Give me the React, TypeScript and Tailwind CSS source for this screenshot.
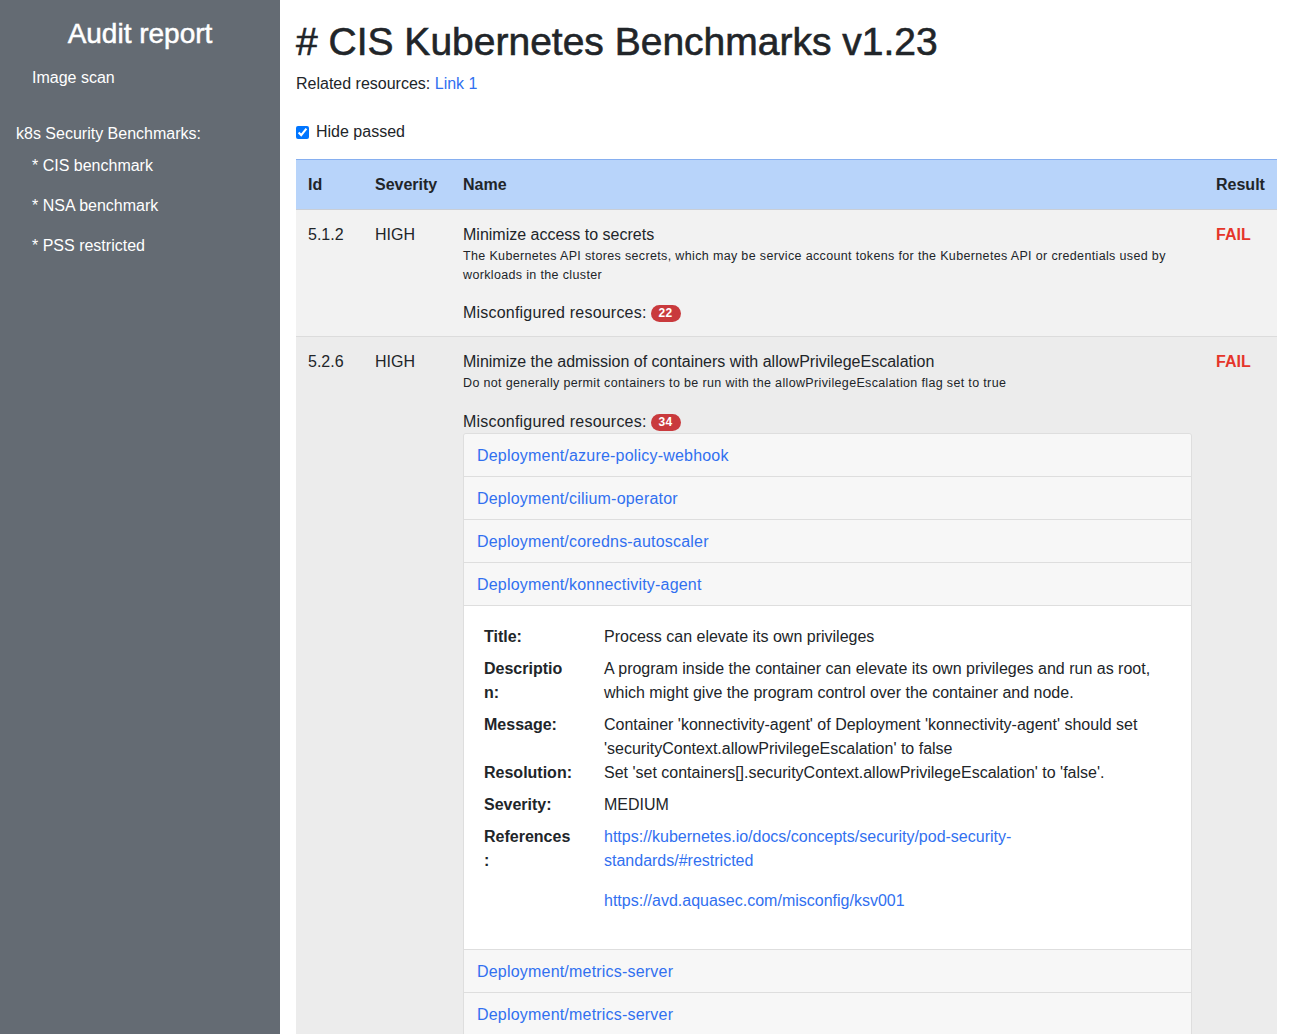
import React from "react";

const LINK = "text-[#3170f0]";

function ListItem({ name }: { name: string }) {
  return (
    <div className="border-t border-[#dedede] bg-[#f7f7f7] px-[13px] pt-[10px] pb-[8px] first:border-t-0">
      <a className={`${LINK} leading-6 tracking-[0.2px]`} href="#">
        {name}
      </a>
    </div>
  );
}

function DetailRow({
  label,
  children,
  className = "",
}: {
  label: React.ReactNode;
  children: React.ReactNode;
  className?: string;
}) {
  return (
    <div className={`flex ${className}`}>
      <div className="w-[120px] shrink-0 font-bold leading-6">{label}</div>
      <div className="leading-6 whitespace-nowrap">{children}</div>
    </div>
  );
}

function Badge({ n }: { n: string }) {
  return (
    <span className="ml-1 inline-flex items-center rounded-full bg-[#c93a3d] px-[8px] h-[17px] text-[12px] font-bold text-white tracking-[0.3px]">
      {n}
    </span>
  );
}

export default function App() {
  return (
    <div className="flex min-h-screen font-['Liberation_Sans',Arial,sans-serif] text-[16px] text-[#212529]">
      <aside className="w-[280px] shrink-0 bg-[#646b73] text-white pt-[17px]">
        <h2 className="text-center text-[28px] leading-[34px] [-webkit-text-stroke:0.5px_white]">
          Audit report
        </h2>
        <div className="mt-[15px] pl-8 leading-6">Image scan</div>
        <div className="mt-8 pl-4 leading-6">k8s Security Benchmarks:</div>
        <div className="mt-2 pl-8 leading-6">* CIS benchmark</div>
        <div className="mt-4 pl-8 leading-6">* NSA benchmark</div>
        <div className="mt-4 pl-8 leading-6">* PSS restricted</div>
      </aside>

      <main className="flex-1 pl-4 pr-[14px] pt-[18px] bg-white">
        <h1 className="text-[39px] leading-[47px] font-medium text-[#212529] [-webkit-text-stroke:0.6px_#212529]">
          # CIS Kubernetes Benchmarks v1.23
        </h1>
        <div className="mt-[7px] leading-6">
          Related resources:{" "}
          <a href="#" className={LINK}>
            Link 1
          </a>
        </div>
        <label className="mt-6 flex items-center leading-6">
          <input
            type="checkbox"
            defaultChecked
            className="w-[13px] h-[13px] m-0 mr-[7px]"
          />
          Hide passed
        </label>

        <table className="mt-[15px] w-full table-fixed border-collapse">
          <colgroup>
            <col className="w-[67px]" />
            <col className="w-[88px]" />
            <col />
            <col className="w-[73px]" />
          </colgroup>
          <thead>
            <tr className="bg-[#b8d4fa] border-t border-t-[#86aff0] border-b border-b-[#c9ced6]">
              <th className="px-3 pt-[13px] pb-3 text-left font-bold leading-6">Id</th>
              <th className="px-3 pt-[13px] pb-3 text-left font-bold leading-6">Severity</th>
              <th className="px-3 pt-[13px] pb-3 text-left font-bold leading-6">Name</th>
              <th className="px-3 pt-[13px] pb-3 text-left font-bold leading-6">Result</th>
            </tr>
          </thead>
          <tbody>
            <tr className="bg-[#f2f2f2] border-b border-[#dcdcdc] align-top">
              <td className="px-3 pt-[13px] pb-3 leading-6">5.1.2</td>
              <td className="px-3 pt-[13px] pb-3 leading-6">HIGH</td>
              <td className="px-3 pt-[13px] pb-[11px]">
                <div className="leading-6">Minimize access to secrets</div>
                <div className="text-[12.5px] leading-[19px] tracking-[0.35px] whitespace-nowrap">
                  The Kubernetes API stores secrets, which may be service account tokens for the
                  Kubernetes API or credentials used by
                  <br />
                  workloads in the cluster
                </div>
                <div className="mt-4 leading-6 flex items-center tracking-[0.2px]">
                  Misconfigured resources:
                  <Badge n="22" />
                </div>
              </td>
              <td className="px-3 pt-[13px] pb-3 leading-6 font-bold text-[#e5352a]">FAIL</td>
            </tr>
            <tr className="bg-[#ececec] align-top">
              <td className="px-3 pt-[13px] pb-3 leading-6">5.2.6</td>
              <td className="px-3 pt-[13px] pb-3 leading-6">HIGH</td>
              <td className="px-3 pt-[13px] pb-3">
                <div className="leading-6">
                  Minimize the admission of containers with allowPrivilegeEscalation
                </div>
                <div className="text-[12.5px] leading-[19px] tracking-[0.35px] whitespace-nowrap">
                  Do not generally permit containers to be run with the allowPrivilegeEscalation
                  flag set to true
                </div>
                <div className="mt-[17px] -mb-px leading-6 flex items-center tracking-[0.2px]">
                  Misconfigured resources:
                  <Badge n="34" />
                </div>
                <div className="border border-[#dedede] rounded-[3px] overflow-hidden">
                  <ListItem name="Deployment/azure-policy-webhook" />
                  <ListItem name="Deployment/cilium-operator" />
                  <ListItem name="Deployment/coredns-autoscaler" />
                  <ListItem name="Deployment/konnectivity-agent" />
                  <div className="border-t border-[#dedede] bg-white pl-5 pr-4 pt-[19px] pb-9">
                    <DetailRow label="Title:">Process can elevate its own privileges</DetailRow>
                    <DetailRow
                      className="mt-2"
                      label={
                        <>
                          Descriptio
                          <br />
                          n:
                        </>
                      }
                    >
                      A program inside the container can elevate its own privileges and run as root,
                      <br />
                      which might give the program control over the container and node.
                    </DetailRow>
                    <DetailRow className="mt-2" label="Message:">
                      Container 'konnectivity-agent' of Deployment 'konnectivity-agent' should set
                      <br />
                      'securityContext.allowPrivilegeEscalation' to false
                    </DetailRow>
                    <DetailRow label="Resolution:">
                      Set 'set containers[].securityContext.allowPrivilegeEscalation' to 'false'.
                    </DetailRow>
                    <DetailRow className="mt-2" label="Severity:">
                      MEDIUM
                    </DetailRow>
                    <DetailRow
                      className="mt-2"
                      label={
                        <>
                          References
                          <br />:
                        </>
                      }
                    >
                      <a href="#" className={LINK}>
                        https://kubernetes.io/docs/concepts/security/pod-security-
                        <br />
                        standards/#restricted
                      </a>
                      <div className="mt-4">
                        <a href="#" className={LINK}>
                          https://avd.aquasec.com/misconfig/ksv001
                        </a>
                      </div>
                    </DetailRow>
                  </div>
                  <ListItem name="Deployment/metrics-server" />
                  <ListItem name="Deployment/metrics-server" />
                  <ListItem name="Deployment/omsagent-rs" />
                  <ListItem name="Deployment/tunnelfront" />
                </div>
              </td>
              <td className="px-3 pt-[13px] pb-3 leading-6 font-bold text-[#e5352a]">FAIL</td>
            </tr>
          </tbody>
        </table>
      </main>
    </div>
  );
}
